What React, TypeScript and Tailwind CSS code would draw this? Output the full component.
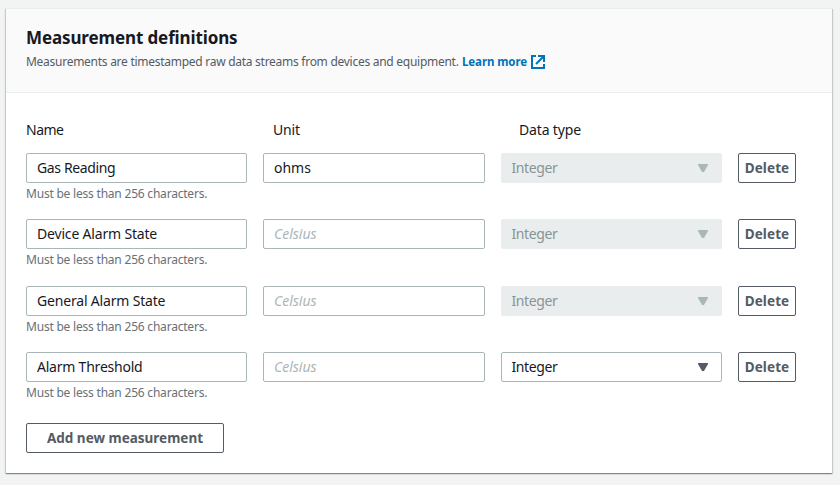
import React from "react";

type Measurement = { name: string; unit: string; locked: boolean; gap: string; tracking: string };

const measurements: Measurement[] = [
  { name: "Gas Reading", unit: "ohms", locked: true, gap: "h-[66px]", tracking: "tracking-[-0.36px]" },
  { name: "Device Alarm State", unit: "", locked: true, gap: "h-[67px]", tracking: "tracking-[-0.18px]" },
  { name: "General Alarm State", unit: "", locked: true, gap: "h-[66px]", tracking: "tracking-[-0.18px]" },
  { name: "Alarm Threshold", unit: "", locked: false, gap: "h-[71px]", tracking: "tracking-[-0.22px]" },
];

const columns = "grid grid-cols-[221px_222px_221px_58px] gap-x-4";
const field =
  "h-[30px] w-full rounded-[2px] border border-[#aab7b8] bg-white px-2.5 pb-0.5 text-sm leading-5 text-[#16191f] outline-none placeholder:italic placeholder:text-[#aab7b8]";
const button =
  "h-[30px] rounded-[2px] border border-[#545b64] bg-white text-[13.5px] leading-5 font-bold text-[#545b64]";

function ExternalIcon() {
  return (
    <svg className="ml-1 h-3.5 w-3.5" viewBox="0 0 14 14" fill="none" stroke="#0073bb" strokeWidth="2">
      <path d="M5 1H1v12h12V9" />
      <path d="M7 1h6v6" />
      <path d="M13 1 5 9" />
    </svg>
  );
}

function TypeSelect({ locked }: { locked: boolean }) {
  return (
    <div
      className={`flex h-[30px] items-center justify-between rounded-[2px] border pr-[13px] pl-[9.5px] text-sm leading-5 ${
        locked ? "border-[#eaeded] bg-[#eaeded] text-[#879596]" : "border-[#aab7b8] bg-white text-[#16191f]"
      }`}
    >
      <span className="tracking-[-0.4px]">Integer</span>
      <svg className={`h-2 w-2.5 ${locked ? "text-[#aab7b8]" : "text-[#545b64]"}`} viewBox="0 0 10 8">
        <path d="M0 0h10v1L6 8H4L0 1z" fill="currentColor" />
      </svg>
    </div>
  );
}

export default function App() {
  return (
    <div className="h-[485px] w-[840px] bg-[#f2f3f3] pt-[8px] pl-[6px] font-['Noto_Sans','Open_Sans',sans-serif]">
      <section className="h-[465px] w-[826px] bg-white shadow-[0_1px_1px_0_rgba(0,28,36,0.3),1px_1px_1px_0_rgba(0,28,36,0.15),-1px_1px_1px_0_rgba(0,28,36,0.15)]">
        <header className="h-[85px] border-t border-b border-[#eaeded] bg-[#fafafa] px-5 pt-[18px]">
          <h2 className="text-[17px] leading-[22px] font-bold tracking-[-0.12px] text-[#16191f]">
            Measurement definitions
          </h2>
          <p className="mt-[4px] flex items-center text-xs leading-[18px] whitespace-nowrap text-[#545b64]">
            <span className="w-[432px] tracking-[-0.27px]">
              Measurements are timestamped raw data streams from devices and equipment.
            </span>
            <a className="ml-1 flex items-center font-bold text-[#0073bb]">
              <span className="w-[65px] text-[11.5px] tracking-[-0.1px]">Learn more</span>
              <ExternalIcon />
            </a>
          </p>
        </header>
        <div className="px-5 pt-[27px]">
          <div className="flex h-[33px] text-sm leading-5 tracking-[-0.15px] text-[#16191f]">
            <span className="w-[247px] tracking-[-0.5px]">Name</span>
            <span className="w-[246px]">Unit</span>
            <span>Data type</span>
          </div>
          {measurements.map((m) => (
            <div key={m.name} className={`${columns} ${m.gap} items-start`}>
              <div>
                <input className={`${field} ${m.tracking}`} defaultValue={m.name} />
                <p className="mt-[2px] text-xs leading-[18px] tracking-[-0.21px] text-[#687078]">
                  Must be less than 256 characters.
                </p>
              </div>
              <input className={field} defaultValue={m.unit} placeholder="Celsius" />
              <TypeSelect locked={m.locked} />
              <button className={`${button} tracking-[0.1px]`}>Delete</button>
            </div>
          ))}
          <button className={`${button} w-[198px]`}>Add new measurement</button>
        </div>
      </section>
    </div>
  );
}
